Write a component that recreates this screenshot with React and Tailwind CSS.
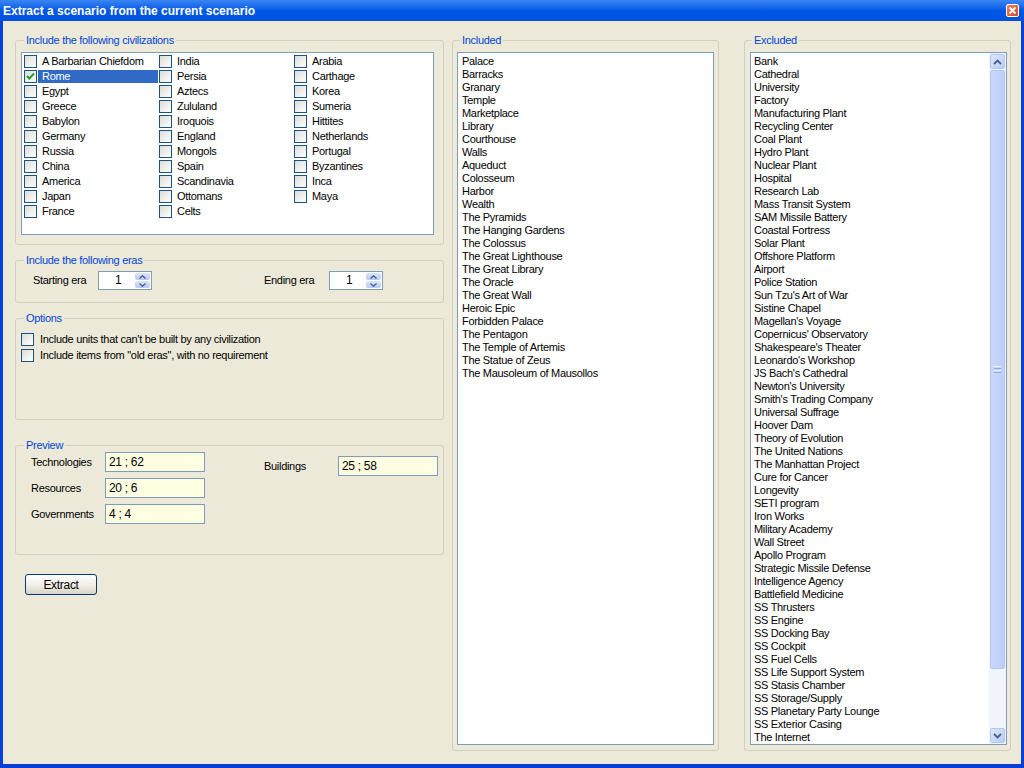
import React from "react";

const civColumns = [
  ["A Barbarian Chiefdom", "Rome", "Egypt", "Greece", "Babylon", "Germany", "Russia", "China", "America", "Japan", "France"],
  ["India", "Persia", "Aztecs", "Zululand", "Iroquois", "England", "Mongols", "Spain", "Scandinavia", "Ottomans", "Celts"],
  ["Arabia", "Carthage", "Korea", "Sumeria", "Hittites", "Netherlands", "Portugal", "Byzantines", "Inca", "Maya"],
];

const included = [
  "Palace", "Barracks", "Granary", "Temple", "Marketplace", "Library", "Courthouse", "Walls",
  "Aqueduct", "Colosseum", "Harbor", "Wealth", "The Pyramids", "The Hanging Gardens", "The Colossus",
  "The Great Lighthouse", "The Great Library", "The Oracle", "The Great Wall", "Heroic Epic",
  "Forbidden Palace", "The Pentagon", "The Temple of Artemis", "The Statue of Zeus",
  "The Mausoleum of Mausollos",
];

const excluded = [
  "Bank", "Cathedral", "University", "Factory", "Manufacturing Plant", "Recycling Center", "Coal Plant",
  "Hydro Plant", "Nuclear Plant", "Hospital", "Research Lab", "Mass Transit System", "SAM Missile Battery",
  "Coastal Fortress", "Solar Plant", "Offshore Platform", "Airport", "Police Station", "Sun Tzu's Art of War",
  "Sistine Chapel", "Magellan's Voyage", "Copernicus' Observatory", "Shakespeare's Theater",
  "Leonardo's Workshop", "JS Bach's Cathedral", "Newton's University", "Smith's Trading Company",
  "Universal Suffrage", "Hoover Dam", "Theory of Evolution", "The United Nations", "The Manhattan Project",
  "Cure for Cancer", "Longevity", "SETI program", "Iron Works", "Military Academy", "Wall Street",
  "Apollo Program", "Strategic Missile Defense", "Intelligence Agency", "Battlefield Medicine",
  "SS Thrusters", "SS Engine", "SS Docking Bay", "SS Cockpit", "SS Fuel Cells", "SS Life Support System",
  "SS Stasis Chamber", "SS Storage/Supply", "SS Planetary Party Lounge", "SS Exterior Casing", "The Internet",
];

function GroupBox({ label, className, labelLeft = "left-[8px]", children }) {
  return (
    <div className={"relative border border-[#D0D0BF] rounded-[3px] " + className}>
      <span className={"absolute -top-[7px] px-[2px] bg-[#ECE9D8] text-[#0046D5] leading-[13px] whitespace-nowrap " + labelLeft}>
        {label}
      </span>
      {children}
    </div>
  );
}

function CheckBox({ checked }) {
  return (
    <span className="shrink-0 w-[13px] h-[13px] border border-[#1C5180] bg-linear-to-br from-[#DCDCD7] to-white flex items-center justify-center">
      {checked && (
        <svg width="11" height="11" viewBox="0 0 11 11">
          <path d="M2 5 L4.3 7.5 L9 2.5" fill="none" stroke="#21A121" strokeWidth="2" />
        </svg>
      )}
    </span>
  );
}

function Arrow({ up }) {
  return (
    <svg width="7" height="4" viewBox="0 0 7 4">
      <path d={up ? "M0.5 3.5 L3.5 0.8 L6.5 3.5" : "M0.5 0.5 L3.5 3.2 L6.5 0.5"} fill="none" stroke="#4D6185" strokeWidth="1.4" />
    </svg>
  );
}

function Spinner({ value }) {
  return (
    <div className="w-[54px] h-[19px] border border-[#7F9DB9] bg-white flex">
      <span className="flex-1 pl-[16px] leading-[17px] text-[12px]">{value}</span>
      <div className="w-[15px] mr-[1px] py-[1px] flex flex-col gap-[1px]">
        <div className="flex-1 rounded-[2px] bg-linear-to-b from-[#DCE5FD] to-[#B7CAF6] flex items-center justify-center">
          <Arrow up />
        </div>
        <div className="flex-1 rounded-[2px] bg-linear-to-b from-[#DCE5FD] to-[#B7CAF6] flex items-center justify-center">
          <Arrow />
        </div>
      </div>
    </div>
  );
}

function InfoBox({ label, value }) {
  return (
    <div className="flex items-center">
      <span className="w-[74px]">{label}</span>
      <div className="w-[100px] h-[20px] border border-[#7F9DB9] bg-[#FFFFE1] pl-[3px] leading-[18px] text-[12px]">
        {value}
      </div>
    </div>
  );
}

function ScrollButton({ up }) {
  return (
    <div className="h-[15px] rounded-[2px] border border-[#B4C7F4] bg-linear-to-br from-[#DDE6FE] to-[#B9CCF8] flex items-center justify-center">
      <svg width="9" height="6" viewBox="0 0 9 6">
        <path d={up ? "M1 5 L4.5 1.5 L8 5" : "M1 1 L4.5 4.5 L8 1"} fill="none" stroke="#4D6185" strokeWidth="1.8" />
      </svg>
    </div>
  );
}

export default function App() {
  return (
    <div className="w-[1024px] h-[768px] bg-[#0A3FD6] flex flex-col font-['Liberation_Sans',Arial,sans-serif] text-[11px] tracking-[-0.3px] text-black overflow-hidden">
      {/* title bar */}
      <div className="h-[21px] shrink-0 flex items-center justify-between pl-[3px] pr-[5px] bg-linear-to-b from-[#3A86F5] via-[#0058E6] to-[#0050DC]">
        <span className="text-white font-bold text-[12px] tracking-normal">Extract a scenario from the current scenario</span>
        <div className="w-[13px] h-[13px] rounded-[2px] border border-white bg-linear-to-br from-[#F0845F] to-[#D7441C] flex items-center justify-center">
          <svg width="9" height="9" viewBox="0 0 9 9">
            <path d="M1.5 1.5 L7.5 7.5 M7.5 1.5 L1.5 7.5" stroke="white" strokeWidth="1.8" />
          </svg>
        </div>
      </div>

      {/* body */}
      <div className="flex-1 mx-[3px] mb-[4px] bg-[#ECE9D8] flex items-start pl-[12px] pt-[19px]">
        {/* left column */}
        <div className="w-[429px] flex flex-col">
          <GroupBox label="Include the following civilizations" className="h-[205px]">
            <div className="mt-[11px] ml-[5px] mr-[9px] h-[183px] border border-[#7F9DB9] bg-white pt-[1px] pl-[2px] flex">
              {civColumns.map((col, ci) => (
                <div key={ci} className="w-[135px] flex flex-col">
                  {col.map((name) => {
                    const sel = name === "Rome";
                    return (
                      <div key={name} className="h-[15px] flex items-center">
                        <CheckBox checked={sel} />
                        <span
                          className={
                            "ml-[1px] h-[13px] leading-[13px] pl-[4px] whitespace-nowrap " +
                            (sel ? "w-[120px] bg-[#316AC5] text-white" : "")
                          }
                        >
                          {name}
                        </span>
                      </div>
                    );
                  })}
                </div>
              ))}
            </div>
          </GroupBox>

          <GroupBox label="Include the following eras" className="mt-[15px] h-[43px]">
            <div className="pt-[10px] pl-[17px] flex items-center">
              <span className="w-[65px]">Starting era</span>
              <Spinner value="1" />
              <span className="ml-[112px] w-[65px]">Ending era</span>
              <Spinner value="1" />
            </div>
          </GroupBox>

          <GroupBox label="Options" className="mt-[15px] h-[102px]">
            <div className="pt-[12px] pl-[5px] flex flex-col">
              <div className="h-[16px] flex items-center gap-[6px]">
                <CheckBox />
                <span>Include units that can't be built by any civilization</span>
              </div>
              <div className="h-[16px] flex items-center gap-[6px]">
                <CheckBox />
                <span>Include items from "old eras", with no requirement</span>
              </div>
            </div>
          </GroupBox>

          <GroupBox label="Preview" className="mt-[25px] h-[110px]">
            <div className="flex items-start">
              <div className="pl-[15px] pt-[6px] flex flex-col gap-[6px]">
                <InfoBox label="Technologies" value="21 ; 62" />
                <InfoBox label="Resources" value="20 ; 6" />
                <InfoBox label="Governments" value="4 ; 4" />
              </div>
              <div className="ml-[59px] pt-[10px]">
                <InfoBox label="Buildings" value="25 ; 58" />
              </div>
            </div>
          </GroupBox>

          <button className="mt-[19px] ml-[10px] w-[72px] h-[21px] rounded-[3px] border border-[#003C74] bg-linear-to-b from-white via-[#F1EFE8] to-[#D8D3C8] text-[12px] tracking-[-0.3px]">
            Extract
          </button>
        </div>

        {/* included */}
        <GroupBox label="Included" labelLeft="left-[7px]" className="ml-[8px] w-[267px] h-[711px]">
          <div className="mt-[11px] ml-[4px] w-[257px] h-[693px] border border-[#7F9DB9] bg-white pt-[2px] pl-[4px] overflow-hidden">
            {included.map((n) => (
              <div key={n} className="h-[13px] leading-[13px] whitespace-nowrap">{n}</div>
            ))}
          </div>
        </GroupBox>

        {/* excluded */}
        <GroupBox label="Excluded" labelLeft="left-[7px]" className="ml-[25px] w-[267px] h-[711px]">
          <div className="mt-[11px] ml-[5px] w-[257px] h-[693px] border border-[#7F9DB9] bg-white flex">
            <div className="flex-1 pt-[2px] pl-[3px] overflow-hidden">
              {excluded.map((n) => (
                <div key={n} className="h-[13px] leading-[13px] whitespace-nowrap">{n}</div>
              ))}
            </div>
            <div className="w-[17px] bg-[#F2F4FB] p-[1px] flex flex-col">
              <ScrollButton up />
              <div className="mt-[1px] h-[599px] rounded-[2px] border border-[#B4C7F4] bg-linear-to-r from-[#C9D8FC] to-[#BCCEF9] flex flex-col items-center justify-center gap-[1px]">
                <div className="w-[7px] h-[1px] bg-[#EEF3FE]" />
                <div className="w-[7px] h-[1px] bg-[#8CA8E8]" />
                <div className="w-[7px] h-[1px] bg-[#EEF3FE]" />
                <div className="w-[7px] h-[1px] bg-[#8CA8E8]" />
              </div>
              <div className="flex-1" />
              <ScrollButton />
            </div>
          </div>
        </GroupBox>
      </div>
    </div>
  );
}
